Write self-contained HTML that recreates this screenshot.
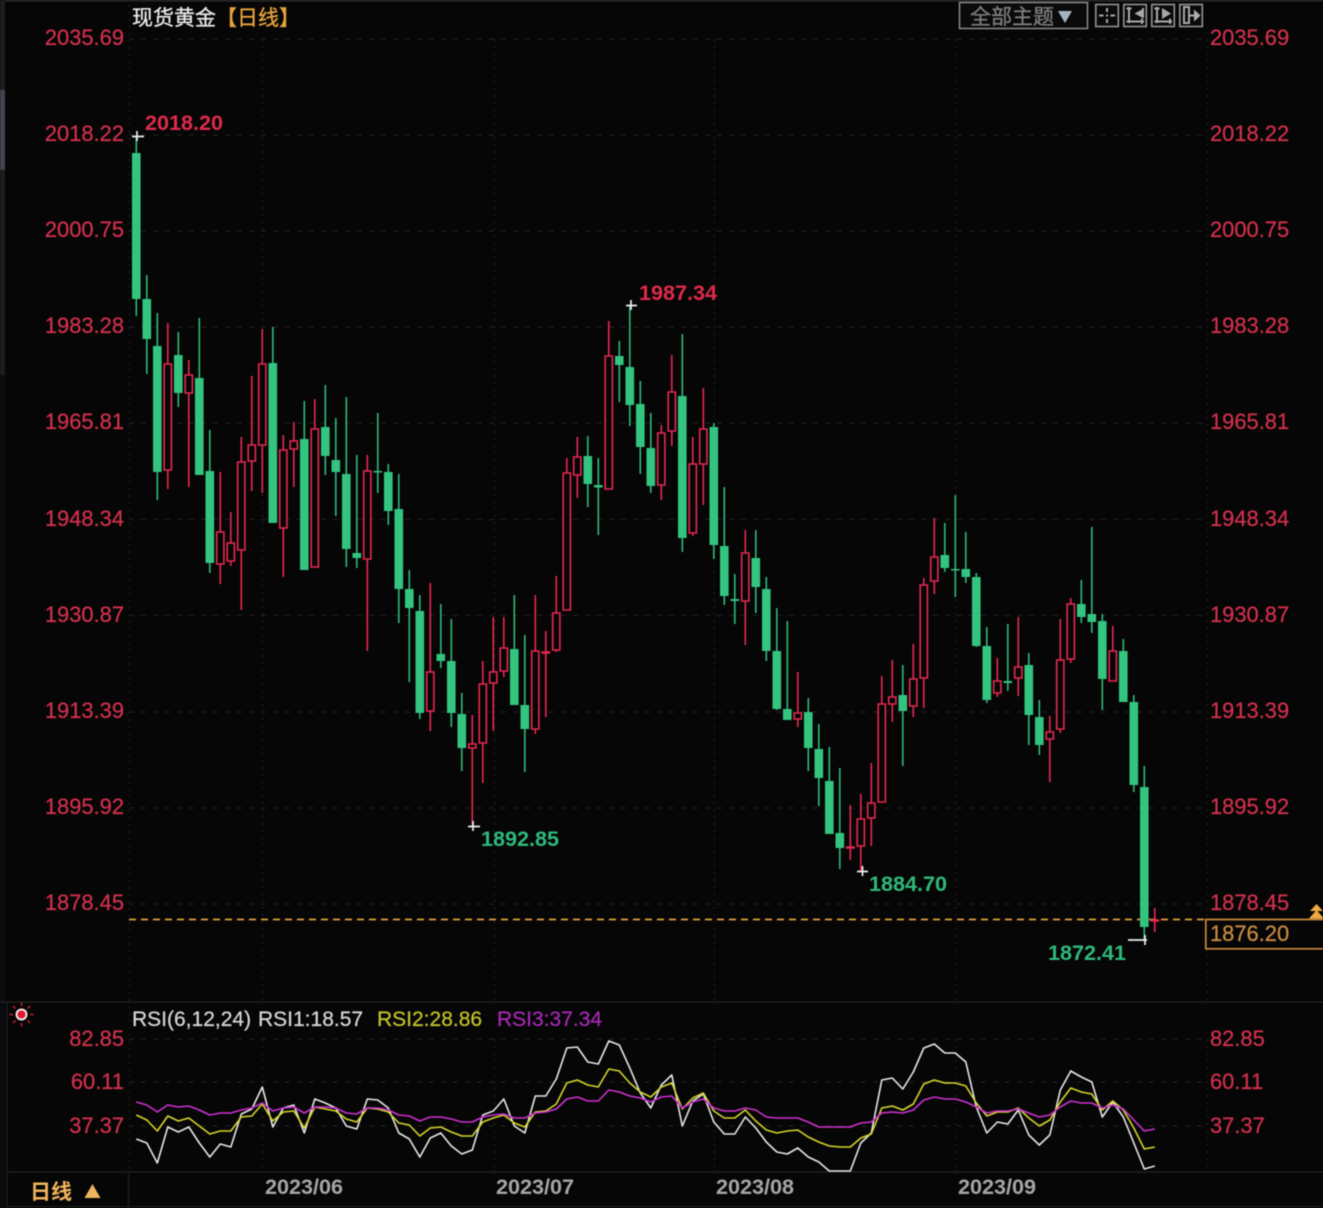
<!DOCTYPE html>
<html><head><meta charset="utf-8"><title>现货黄金</title>
<style>
html,body{margin:0;padding:0;background:#060606;width:1323px;height:1208px;overflow:hidden}
svg{display:block;filter:blur(.4px)}
text{font-family:"Liberation Sans","Noto Sans CJK SC",sans-serif}
.l{font-size:21.9px;fill:#d0304c;stroke:#d0304c;stroke-width:.25px}
.p{font-size:21.6px;font-weight:bold}
.d{font-size:21.6px;font-weight:bold;fill:#a6a6a6}
.r{font-size:21px;stroke-width:.25px}
</style></head><body>
<svg width="1323" height="1208" viewBox="0 0 1323 1208" xmlns="http://www.w3.org/2000/svg">
<rect width="1323" height="1208" fill="#060606"/>
<rect width="1323" height="1.5" fill="#2c2c2c"/>
<rect x="0" y="0" width="5" height="375" fill="#1d1d20"/>
<rect x="0" y="90" width="5" height="80" fill="#44444c"/>
<rect x="0" y="375" width="5" height="833" fill="#0c0c0e"/>
<!-- frame -->
<path d="M0 1002H1323M7 1172H1323" stroke="#202020" stroke-width="1.5" fill="none"/>
<path d="M7 1002V1208M128.500 1172V1208" stroke="#1c1c1c" stroke-width="1.5" fill="none"/>
<path d="M7 1206.500H1323" stroke="#181818" stroke-width="1.500" fill="none"/>
<!-- grid -->
<path d="M129 39H1207M129 135H1207M129 231H1207M129 327H1207M129 423H1207M129 519.500H1207M129 615.500H1207M129 712H1207M129 808H1207M129 904H1207M129 1039H1207M129 1082H1207M129 1126H1207" stroke="#232323" stroke-width="1" stroke-dasharray="5 7" fill="none"/>
<path d="M129.500 5V1172M1207.500 39V1000M1207.500 1039V1172M262.500 39V1000M262.500 1039V1172M494.500 39V1000M494.500 1039V1178M714.500 39V1000M714.500 1039V1178M955.500 39V1000M955.500 1039V1178" stroke="#252525" stroke-width="1" stroke-dasharray="2 5" fill="none"/>
<!-- title -->
<text x="132" y="25" font-size="21" fill="#e8e8e8" stroke="#e8e8e8" stroke-width=".35">现货黄金</text>
<text x="216" y="25" font-size="21" fill="#e6a23c" stroke="#e6a23c" stroke-width=".35">【日线】</text>
<!-- toolbar -->
<rect x="959.500" y="2.500" width="128" height="26" fill="#0a0a0a" stroke="#8a8a8a" stroke-width="1.500"/>
<text x="970" y="24" font-size="21" fill="#7f7f7f" stroke="#7f7f7f" stroke-width=".3">全部主题</text>
<path d="M1058 11H1072L1065 23Z" fill="#a7b4c0"/>
<g fill="#0a0a0a" stroke="#929292" stroke-width="1.600">
<rect x="1095.800" y="4.500" width="22.500" height="22"/>
<rect x="1123.800" y="4.500" width="22.500" height="22"/>
<rect x="1151.800" y="4.500" width="22.500" height="22"/>
<rect x="1179.800" y="4.500" width="22.500" height="22"/>
</g>
<g fill="none" stroke="#a8a8a8" stroke-width="2">
<path d="M1107 8V12M1107 14.500V16.500M1107 19V23M1099 15.500H1103.500M1110.500 15.500H1115"/>
<path d="M1129 7V23M1126.500 8.500H1131.500M1126.500 21.500H1144M1142 18.500V24"/>
<path d="M1143 8V18"/>
<path d="M1157 7V23M1154.500 8.500H1159.500M1154.500 21.500H1172M1170 18.500V24"/>
<path d="M1184 7V23H1189V7ZM1189 15.500H1194"/>
</g>
<path d="M1142 9.500L1134.500 13.500L1142 17.500Z" fill="#a8a8a8"/>
<path d="M1162 8L1171 13.500L1162 19Z" fill="#a8a8a8"/>
<path d="M1194 9.500L1200.500 15.500L1194 21.500Z" fill="#b0b0b0"/>
<!-- left axis -->
<g>
<text class="l" text-anchor="end" x="124" y="45">2035.69</text>
<text class="l" text-anchor="end" x="124" y="141">2018.22</text>
<text class="l" text-anchor="end" x="124" y="237">2000.75</text>
<text class="l" text-anchor="end" x="124" y="333">1983.28</text>
<text class="l" text-anchor="end" x="124" y="429">1965.81</text>
<text class="l" text-anchor="end" x="124" y="526">1948.34</text>
<text class="l" text-anchor="end" x="124" y="622">1930.87</text>
<text class="l" text-anchor="end" x="124" y="718">1913.39</text>
<text class="l" text-anchor="end" x="124" y="814">1895.92</text>
<text class="l" text-anchor="end" x="124" y="910">1878.45</text>
<text class="l" text-anchor="end" x="124" y="1046">82.85</text>
<text class="l" text-anchor="end" x="124" y="1089">60.11</text>
<text class="l" text-anchor="end" x="124" y="1133">37.37</text>
</g>
<!-- right axis -->
<g>
<text class="l" x="1210" y="45">2035.69</text>
<text class="l" x="1210" y="141">2018.22</text>
<text class="l" x="1210" y="237">2000.75</text>
<text class="l" x="1210" y="333">1983.28</text>
<text class="l" x="1210" y="429">1965.81</text>
<text class="l" x="1210" y="526">1948.34</text>
<text class="l" x="1210" y="622">1930.87</text>
<text class="l" x="1210" y="718">1913.39</text>
<text class="l" x="1210" y="814">1895.92</text>
<text class="l" x="1210" y="910">1878.45</text>
<text class="l" x="1210" y="1046">82.85</text>
<text class="l" x="1210" y="1089">60.11</text>
<text class="l" x="1210" y="1133">37.37</text>
</g>
<!-- last price line -->
<path d="M129 919.500H1206" stroke="#e0a040" stroke-width="1.700" stroke-dasharray="7 5" fill="none"/>
<!-- green wicks -->
<path fill="none" stroke="#2fb877" stroke-width="1.600" d="M136.300 137V316M146.800 275V374M157.300 313V500M178.300 332V407M199.300 318V475M209.800 430V573M272.800 327V523M304.300 401V570M325.300 385V475M335.800 418V516M346.300 397V567M356.800 455V568M377.800 413V493M388.300 464V525M398.800 474V623M409.300 570V682M419.800 595V719M440.800 604V668M451.300 619V727M461.800 693V771M514.300 595V705M524.800 635V772M587.800 436V507M598.300 458V535M619.300 341V402M629.800 306V426M640.300 381V474M650.800 413V493M682.300 334V552M713.800 423V559M724.300 487V605M734.800 574V624M755.800 530V613M766.300 577V661M776.800 608V710M787.300 621V720M808.300 698V771M818.800 724V806M829.300 747V834M839.800 768V869M902.800 665V766M944.800 523V572M955.300 495V597M965.800 532V583M976.300 573V647M986.800 627V703M1007.800 624V691M1028.800 653V745M1039.300 700V755M1081.300 580V623M1091.800 527V633M1102.300 614V710M1123.300 639V702M1133.800 695V792M1144.300 766V940"/>
<!-- red wicks -->
<path fill="none" stroke="#e62850" stroke-width="1.600" d="M167.800 323V489M188.800 360V487M220.300 472V584M230.800 512V566M241.300 437V610M251.800 376V491M262.300 329V493M283.300 435V577M293.800 422V487M314.800 399V567M367.300 455V651M430.300 583V731M472.300 715V826M482.800 661V783M493.300 617V731M503.800 617V677M535.300 595V734M545.800 631V717M556.300 576V652M566.800 458V610M577.300 437V498M608.800 321V489M661.300 425V500M671.800 355V446M692.800 437V536M703.300 388V505M745.300 530V645M797.800 672V727M850.300 805V860M860.800 794V872M871.300 763V846M881.800 676V802M892.300 660V722M913.300 644V717M923.800 578V708M934.300 518V594M997.300 658V697M1018.300 617V696M1049.800 716V782M1060.300 619V733M1070.800 598V663M1112.800 626V681M1154.800 908V932"/>
<!-- green bodies -->
<path fill="#33c47f" d="M132 153h8.600V299h-8.600zM142.500 299h8.600V339h-8.600zM153 346h8.600V472h-8.600zM174 355h8.600V393h-8.600zM195 378h8.600V475h-8.600zM205.500 471h8.600V563h-8.600zM268.500 363h8.600V523h-8.600zM300 439h8.600V570h-8.600zM321 427h8.600V456h-8.600zM331.500 460h8.600V472h-8.600zM342 474h8.600V549h-8.600zM352.500 553h8.600V558h-8.600zM373.500 471h8.600V472.500h-8.600zM384 472h8.600V511h-8.600zM394.500 509h8.600V589h-8.600zM405 589h8.600V608h-8.600zM415.500 611h8.600V713h-8.600zM436.500 654h8.600V661h-8.600zM447 661h8.600V713h-8.600zM457.500 714h8.600V748h-8.600zM510 649h8.600V705h-8.600zM520.500 705h8.600V729h-8.600zM583.500 456h8.600V484h-8.600zM594 485h8.600V487.500h-8.600zM615 356h8.600V365h-8.600zM625.500 367h8.600V405h-8.600zM636 404h8.600V447h-8.600zM646.500 448h8.600V486h-8.600zM678 396h8.600V538h-8.600zM709.500 427h8.600V545h-8.600zM720 546h8.600V596h-8.600zM730.500 599h8.600V601h-8.600zM751.500 558h8.600V587h-8.600zM762 589h8.600V651h-8.600zM772.500 651h8.600V709h-8.600zM783 709h8.600V720h-8.600zM804 712h8.600V748h-8.600zM814.500 749h8.600V778h-8.600zM825 781h8.600V834h-8.600zM835.500 833h8.600V848h-8.600zM898.500 695h8.600V711h-8.600zM940.500 555h8.600V568h-8.600zM951 569h8.600V570.500h-8.600zM961.500 569h8.600V577h-8.600zM972 577h8.600V646h-8.600zM982.500 646h8.600V700h-8.600zM1003.500 681h8.600V683h-8.600zM1024.500 665h8.600V715h-8.600zM1035 717h8.600V745h-8.600zM1077 604h8.600V617h-8.600zM1087.500 614h8.600V622h-8.600zM1098 621h8.600V679h-8.600zM1119 651h8.600V702h-8.600zM1129.500 702h8.600V785h-8.600zM1140 787h8.600V927h-8.600z"/>
<!-- red bodies -->
<path fill="#060606" stroke="#e62850" stroke-width="1.600" d="M164.200 364h7.200V470h-7.200zM185.200 375h7.200V393h-7.200zM216.700 532h7.200V564h-7.200zM227.200 543h7.200V561h-7.200zM237.700 462h7.200V550h-7.200zM248.200 445h7.200V461h-7.200zM258.700 364h7.200V445h-7.200zM279.700 450h7.200V528h-7.200zM290.200 441h7.200V449h-7.200zM311.200 429h7.200V567h-7.200zM363.700 471h7.200V559h-7.200zM426.700 672h7.200V711h-7.200zM468.700 744h7.200V748h-7.200zM479.200 684h7.200V743h-7.200zM489.700 672h7.200V683h-7.200zM500.200 648h7.200V671h-7.200zM531.700 651h7.200V729h-7.200zM542.200 652h7.200V653h-7.200zM552.700 613h7.200V650h-7.200zM563.200 473h7.200V610h-7.200zM573.700 457h7.200V475h-7.200zM605.200 356h7.200V489h-7.200zM657.700 433h7.200V485h-7.200zM668.200 392h7.200V431h-7.200zM689.200 464h7.200V533h-7.200zM699.700 429h7.200V464h-7.200zM741.700 553h7.200V601h-7.200zM794.200 713h7.200V719h-7.200zM846.700 847h7.200V848h-7.200zM857.200 819h7.200V846h-7.200zM867.700 803h7.200V818h-7.200zM878.200 704h7.200V802h-7.200zM888.700 697h7.200V704h-7.200zM909.700 679h7.200V706h-7.200zM920.200 585h7.200V678h-7.200zM930.700 557h7.200V581h-7.200zM993.700 681h7.200V693h-7.200zM1014.700 667h7.200V678h-7.200zM1046.200 732h7.200V739h-7.200zM1056.700 660h7.200V729h-7.200zM1067.200 604h7.200V659h-7.200zM1109.200 651h7.200V681h-7.200zM1151.200 920h7.200V921h-7.200z"/>
<!-- extreme markers -->
<path fill="none" stroke="#eeeeee" stroke-width="1.700" d="M132 136.500H144M137 131V141M626 305.500H637M631 300V310M468 826.500H480M473 821V831M857 871.500H868M862.500 866V876M1128 940H1147M1145 935V945"/>
<text class="p" x="145" y="130" fill="#e02a4a">2018.20</text>
<text class="p" x="639" y="300" fill="#e02a4a">1987.34</text>
<text class="p" x="481" y="846" fill="#2fb97a">1892.85</text>
<text class="p" x="869" y="891" fill="#2fb97a">1884.70</text>
<text class="p" x="1048" y="960" fill="#2fb97a">1872.41</text>
<!-- last price box -->
<path d="M1323 919.500H1205.800V948.800H1323" fill="#060606" stroke="#c88a3a" stroke-width="1.700"/>
<text x="1210" y="941" font-size="21.900" fill="#c98c42" stroke="#c98c42" stroke-width=".25">1876.20</text>
<path d="M1316.500 904L1323 911H1310Z M1316.500 910L1324 918.500H1309Z" fill="#eea944"/>
<!-- RSI header -->
<text class="r" x="132" y="1026" fill="#d6d6d6" stroke="#d6d6d6">RSI(6,12,24)</text>
<text class="r" x="258" y="1026" fill="#d6d6d6" stroke="#d6d6d6">RSI1:18.57</text>
<text class="r" x="377" y="1026" fill="#c2c22a" stroke="#c2c22a">RSI2:28.86</text>
<text class="r" x="497" y="1026" fill="#a728b4" stroke="#a728b4">RSI3:37.34</text>
<!-- sun -->
<circle cx="21.500" cy="1014.500" r="6" fill="#f2e8e8"/>
<circle cx="21.500" cy="1014.500" r="4" fill="#e01830"/>
<path d="M21.500 1002.500V1006M21.500 1023V1026.500M9.500 1014.500H13M30 1014.500H33.500M13 1006L15.500 1008.500M27.500 1020.500L30 1023M13 1023L15.500 1020.500M27.500 1008.500L30 1006" stroke="#a81c28" stroke-width="1.800" fill="none"/>
<!-- RSI lines -->
<g fill="none" stroke-width="1.600" stroke-linejoin="round">
<polyline stroke="#e6e6e6" points="136.300,1139 146.800,1143 157.300,1163 167.800,1127 178.300,1132 188.800,1127 199.300,1143 209.800,1157 220.300,1144 230.800,1147 241.300,1114 251.800,1109 262.300,1087 272.800,1127 283.300,1108 293.800,1105 304.300,1133 314.800,1099 325.300,1103 335.800,1108 346.300,1126 356.800,1129 367.300,1099 377.800,1100 388.300,1108 398.800,1133 409.300,1139 419.800,1157 430.300,1138 440.800,1133 451.300,1146 461.800,1154 472.300,1150 482.800,1115 493.300,1111 503.800,1099 514.300,1126 524.800,1133 535.300,1096 545.800,1096 556.300,1079 566.800,1048 577.300,1047 587.800,1062 598.300,1064 608.800,1041 619.300,1045 629.800,1068 640.300,1093 650.800,1108 661.300,1085 671.800,1075 682.300,1126 692.800,1101 703.300,1094 713.800,1122 724.300,1134 734.800,1134 745.300,1117 755.800,1128 766.300,1142 776.800,1152 787.300,1154 797.800,1148 808.300,1157 818.800,1162 829.300,1171 839.800,1171 850.300,1171 860.800,1143 871.300,1133 881.800,1080 892.300,1078 902.800,1089 913.300,1072 923.800,1048 934.300,1044 944.800,1053 955.300,1053 965.800,1062 976.300,1107 986.800,1133 997.300,1122 1007.800,1124 1018.300,1110 1028.800,1135 1039.300,1145 1049.800,1135 1060.300,1090 1070.800,1071 1081.300,1077 1091.800,1082 1102.300,1117 1112.800,1102 1123.300,1117 1133.800,1143 1144.300,1169 1154.800,1166"/>
<polyline stroke="#d4d42a" points="136.300,1115 146.800,1120 157.300,1131 167.800,1116 178.300,1121 188.800,1118 199.300,1126 209.800,1134 220.300,1131 230.800,1131 241.300,1117 251.800,1116 262.300,1104 272.800,1121 283.300,1112 293.800,1111 304.300,1128 314.800,1107 325.300,1109 335.800,1111 346.300,1119 356.800,1122 367.300,1108 377.800,1109 388.300,1112 398.800,1123 409.300,1125 419.800,1136 430.300,1128 440.800,1127 451.300,1132 461.800,1136 472.300,1136 482.800,1122 493.300,1118 503.800,1115 514.300,1123 524.800,1127 535.300,1112 545.800,1111 556.300,1104 566.800,1083 577.300,1080 587.800,1085 598.300,1087 608.800,1069 619.300,1071 629.800,1083 640.300,1092 650.800,1097 661.300,1087 671.800,1083 682.300,1109 692.800,1098 703.300,1093 713.800,1111 724.300,1118 734.800,1118 745.300,1110 755.800,1121 766.300,1130 776.800,1133 787.300,1131 797.800,1130 808.300,1137 818.800,1142 829.300,1146 839.800,1147 850.300,1147 860.800,1138 871.300,1134 881.800,1108 892.300,1106 902.800,1110 913.300,1104 923.800,1084 934.300,1080 944.800,1083 955.300,1083 965.800,1086 976.300,1103 986.800,1116 997.300,1112 1007.800,1112 1018.300,1108 1028.800,1118 1039.300,1126 1049.800,1120 1060.300,1102 1070.800,1088 1081.300,1092 1091.800,1094 1102.300,1110 1112.800,1101 1123.300,1110 1133.800,1128 1144.300,1149 1154.800,1147"/>
<polyline stroke="#cc30d0" points="136.300,1102 146.800,1105 157.300,1112 167.800,1105 178.300,1107 188.800,1106 199.300,1110 209.800,1115 220.300,1113 230.800,1113 241.300,1110 251.800,1108 262.300,1103 272.800,1111 283.300,1108 293.800,1107 304.300,1113 314.800,1107 325.300,1107 335.800,1108 346.300,1113 356.800,1114 367.300,1108 377.800,1108 388.300,1110 398.800,1115 409.300,1116 419.800,1121 430.300,1117 440.800,1117 451.300,1119 461.800,1122 472.300,1122 482.800,1117 493.300,1115 503.800,1114 514.300,1118 524.800,1118 535.300,1113 545.800,1112 556.300,1109 566.800,1099 577.300,1097 587.800,1101 598.300,1101 608.800,1090 619.300,1092 629.800,1096 640.300,1098 650.800,1102 661.300,1097 671.800,1096 682.300,1108 692.800,1102 703.300,1099 713.800,1108 724.300,1111 734.800,1111 745.300,1108 755.800,1110 766.300,1117 776.800,1118 787.300,1118 797.800,1118 808.300,1122 818.800,1127 829.300,1127 839.800,1127 850.300,1127 860.800,1123 871.300,1122 881.800,1113 892.300,1112 902.800,1113 913.300,1110 923.800,1100 934.300,1097 944.800,1099 955.300,1099 965.800,1102 976.300,1107 986.800,1113 997.300,1111 1007.800,1111 1018.300,1109 1028.800,1113 1039.300,1117 1049.800,1115 1060.300,1107 1070.800,1101 1081.300,1103 1091.800,1103 1102.300,1108 1112.800,1105 1123.300,1109 1133.800,1120 1144.300,1131 1154.800,1129"/>
</g>
<!-- bottom bar -->
<text x="30" y="1199" font-size="21" font-weight="bold" fill="#f0b45c">日线</text>
<path d="M92.500 1184L100.500 1198H84.500Z" fill="#f0b45c"/>
<text class="d" x="265" y="1194">2023/06</text>
<text class="d" x="496" y="1194">2023/07</text>
<text class="d" x="716" y="1194">2023/08</text>
<text class="d" x="958" y="1194">2023/09</text>
</svg>
</body></html>
